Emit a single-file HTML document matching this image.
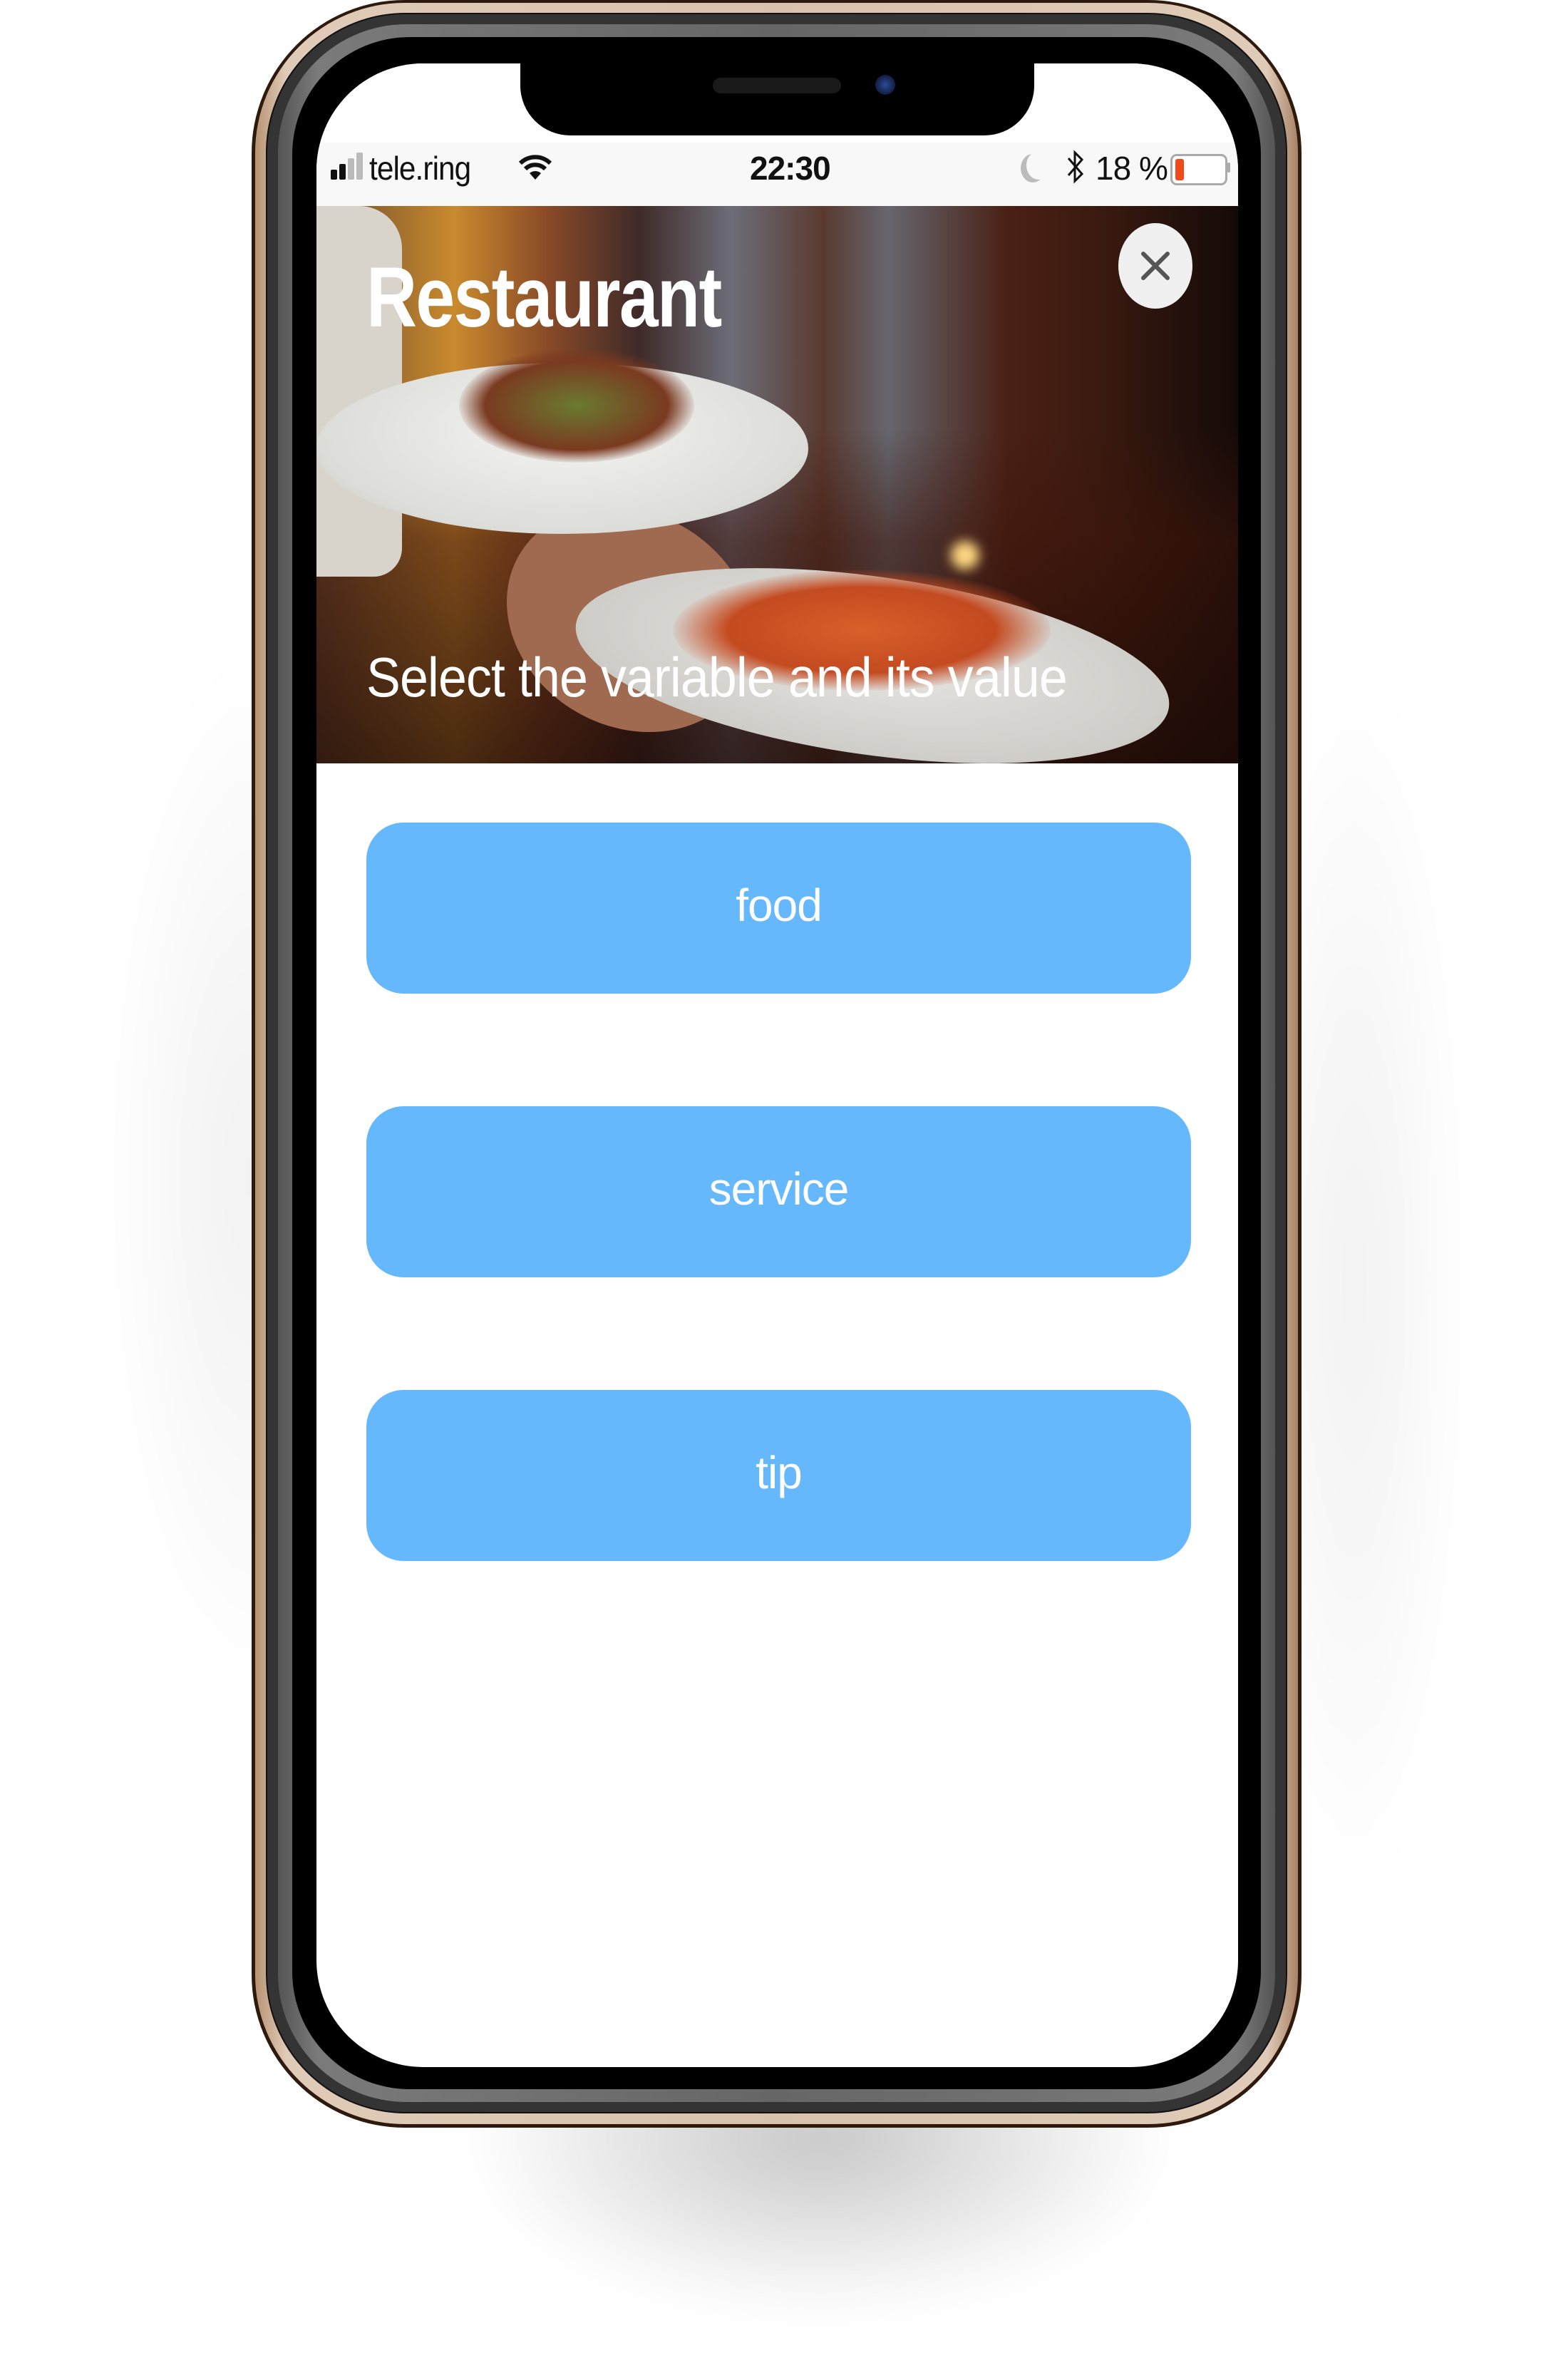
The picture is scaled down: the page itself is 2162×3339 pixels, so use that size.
<!DOCTYPE html>
<html><head><meta charset="utf-8"><style>
html,body{margin:0;padding:0;background:#fff;width:2162px;height:3339px;overflow:hidden;position:relative;font-family:"Liberation Sans",sans-serif}
.abs{position:absolute}
.shadow{left:650px;top:2750px;width:1000px;height:500px;border-radius:50%;background:radial-gradient(ellipse at center,rgba(0,0,0,.22),rgba(0,0,0,0) 70%);filter:blur(30px)}
.shadow2{left:150px;top:900px;width:400px;height:1500px;border-radius:50%;background:radial-gradient(ellipse at center,rgba(0,0,0,.06),rgba(0,0,0,0) 70%);filter:blur(40px)}
.shadow3{left:1750px;top:900px;width:300px;height:1800px;border-radius:50%;background:radial-gradient(ellipse at center,rgba(0,0,0,.06),rgba(0,0,0,0) 70%);filter:blur(40px)}
.phone{left:353px;top:0;width:1473px;height:2985px;border-radius:215px;background:#2e1a0c}
.gold{left:5px;top:4px;right:5px;bottom:5px;border-radius:210px;background:linear-gradient(90deg,#b89373,#e0cbb8 3%,#d9c2ad 50%,#e0cbb8 97%,#a88266)}
.dg{left:20px;top:18px;right:20px;bottom:20px;border-radius:196px;background:#343434;border:2px solid #111;box-sizing:border-box}
.gr{left:37px;top:34px;right:37px;bottom:36px;border-radius:180px;background:linear-gradient(90deg,#555,#7a7a7a 4%,#666 50%,#7a7a7a 96%,#555)}
.bk{left:57px;top:52px;right:57px;bottom:54px;border-radius:165px;background:#000}
.screen{left:91px;top:89px;width:1293px;height:2811px;border-radius:150px;background:#fff;overflow:hidden}
.notch{left:286px;top:0;width:721px;height:101px;background:#000;border-radius:0 0 70px 70px}
.status{left:0;top:111px;width:1293px;height:89px;background:#f8f8f8}
.img{left:0;top:200px;width:1293px;height:782px;overflow:hidden;background:#2a1510}
.btn{left:70px;width:1157px;height:240px;border-radius:52px;background:#66b8fd;color:#fff;font-size:64px;font-weight:300;text-align:center;line-height:232px;letter-spacing:-1px}
</style></head><body>
<div class="abs shadow"></div><div class="abs shadow2"></div><div class="abs shadow3"></div>
<div class="abs phone">
 <div class="abs gold"></div>
 <div class="abs dg"></div>
 <div class="abs gr"></div>
 <div class="abs bk"></div>
 <div class="abs screen">
  <div class="abs img">
   <div class="abs" style="left:0;top:0;width:1293px;height:782px;background:linear-gradient(90deg,#6b4a30 0%,#c98a2e 15%,#8a4a28 25%,#3f2a28 35%,#6d6d78 45%,#5a3a30 55%,#66666e 62%,#4a2015 75%,#3a1a10 85%,#150a08 100%)"></div>
   <div class="abs" style="left:0;top:0;width:1293px;height:782px;background:linear-gradient(180deg,rgba(0,0,0,0) 40%,rgba(60,20,10,.55) 60%,rgba(30,10,5,.75) 100%)"></div>
   <div class="abs" style="left:-20px;top:0;width:140px;height:520px;background:#d8d4cc;border-radius:0 60px 40px 0"></div>
   <div class="abs" style="left:260px;top:430px;width:360px;height:300px;background:#a06a50;border-radius:50%;transform:rotate(30deg)"></div>
   <div class="abs" style="left:0;top:220px;width:690px;height:240px;background:radial-gradient(ellipse at 50% 40%,#f4f4f2,#dcdcd8 70%,#bdbdb8);border-radius:50%"></div>
   <div class="abs" style="left:200px;top:200px;width:330px;height:160px;background:radial-gradient(ellipse,#6a7a30,#7a3a20 55%,rgba(90,60,30,0) 72%);border-radius:50%"></div>
   <div class="abs" style="left:360px;top:520px;width:840px;height:250px;background:radial-gradient(ellipse at 50% 45%,#e8e6e2,#cfcdc8 70%,#a8a6a0);border-radius:50%;transform:rotate(8deg)"></div>
   <div class="abs" style="left:500px;top:510px;width:530px;height:170px;background:radial-gradient(ellipse,#d8602a,#c44a20 50%,rgba(190,80,30,0) 72%);border-radius:50%"></div>
   <div class="abs" style="left:890px;top:470px;width:40px;height:40px;background:#ffd780;border-radius:50%;filter:blur(8px)"></div>
   <div class="abs" style="left:70px;top:58px;color:#fff;font-size:120px;font-weight:bold;letter-spacing:-2px;line-height:140px;transform:scaleX(0.82);transform-origin:0 0;white-space:nowrap">Restaurant</div>
   <div class="abs" style="left:70px;top:616px;color:#fff;font-size:78px;letter-spacing:-1px;line-height:90px;transform:scaleX(0.92);transform-origin:0 0;white-space:nowrap">Select the variable and its value</div>
   <div class="abs" style="left:1125px;top:24px;width:104px;height:120px;border-radius:50%;background:#f0f0f0">
    <svg width="104" height="120" viewBox="0 0 104 120"><path d="M35 43 L69 77 M69 43 L35 77" stroke="#555" stroke-width="6" stroke-linecap="round"/></svg>
   </div>
  </div>
  <div class="abs" style="left:0;top:0;width:1293px;height:111px;background:#fff"></div>
  <div class="abs status"></div>
  <div class="abs notch">
   <div class="abs" style="left:270px;top:20px;width:180px;height:22px;border-radius:11px;background:#1a1a1a"></div>
   <div class="abs" style="left:498px;top:16px;width:28px;height:28px;border-radius:50%;background:radial-gradient(#2a4a9a,#0a0a1a)"></div>
  </div>
  <div class="abs" style="left:20px;top:103px;width:1260px;height:89px;font-size:46px;line-height:89px;color:#111">
   <div class="abs" style="left:0;top:46px;width:9px;height:14px;background:#111;border-radius:2px"></div>
   <div class="abs" style="left:12px;top:38px;width:9px;height:22px;background:#111;border-radius:2px"></div>
   <div class="abs" style="left:24px;top:30px;width:9px;height:30px;background:#bbb;border-radius:2px"></div>
   <div class="abs" style="left:36px;top:22px;width:9px;height:38px;background:#bbb;border-radius:2px"></div>
   <div class="abs" style="left:54px;top:0;letter-spacing:-1px;transform:scaleX(0.92);transform-origin:0 0">tele.ring</div>
   <svg class="abs" style="left:262px;top:22px" width="50" height="40" viewBox="0 0 50 40"><path d="M25 38 L17 29 A12 12 0 0 1 33 29 Z" fill="#111"/><path d="M11 23 A20 20 0 0 1 39 23" stroke="#111" stroke-width="6" fill="none"/><path d="M4 15 A30 30 0 0 1 46 15" stroke="#111" stroke-width="6" fill="none"/></svg>
   <div class="abs" style="left:588px;top:0;font-weight:bold;letter-spacing:-1px">22:30</div>
   <div class="abs" style="left:976px;top:20px;width:34px;height:40px;border-radius:50%;box-shadow:-8px 4px 0 0 #bbb"></div>
   <svg class="abs" style="left:1030px;top:14px" width="30" height="56" viewBox="0 0 30 56"><path d="M5 16 L24 38 L14 48 L14 8 L24 18 L5 40" stroke="#111" stroke-width="3" fill="none"/></svg>
   <div class="abs" style="left:1073px;top:0;letter-spacing:-1px">18 %</div>
   <div class="abs" style="left:1178px;top:24px;width:74px;height:38px;border:3px solid #aaa;border-radius:9px;background:#fff">
    <div class="abs" style="left:4px;top:4px;width:12px;height:30px;background:#f04a1a;border-radius:3px"></div>
   </div>
   <div class="abs" style="left:1258px;top:36px;width:4px;height:14px;background:#aaa;border-radius:2px"></div>
  </div>
  <div class="abs btn" style="top:1065px">food</div>
  <div class="abs btn" style="top:1463px">service</div>
  <div class="abs btn" style="top:1861px">tip</div>
 </div>
</div>
</body></html>
